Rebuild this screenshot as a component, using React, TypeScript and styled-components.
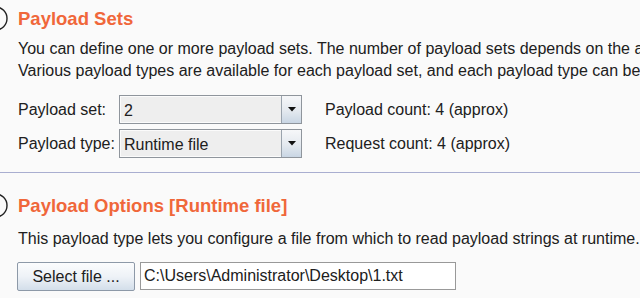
import styled, { createGlobalStyle } from "styled-components";

const GlobalStyle = createGlobalStyle`
  html, body {
    margin: 0;
    padding: 0;
    background: #fafafa;
    overflow: hidden;
  }
  body {
    font-family: "Liberation Sans", Arial, sans-serif;
    color: #202020;
  }
`;

const Page = styled.div`
  width: 640px;
  height: 298px;
  overflow: hidden;
  background: #fafafa;
`;

const Section = styled.section<{ $top: number }>`
  padding: ${(p) => p.$top}px 0 0 0;
`;

const Header = styled.div`
  display: flex;
  align-items: center;
  height: 25px;
`;

const HelpIcon = styled.svg`
  flex: none;
  width: 8px;
  height: 25px;
  margin-right: 10px;
`;

const Title = styled.h2`
  margin: 0;
  font-size: 18.5px;
  font-weight: bold;
  line-height: 25px;
  color: #f0673a;
  white-space: nowrap;
`;

const Body = styled.div`
  padding-left: 18px;
`;

const Text = styled.p<{ $top: number }>`
  margin: ${(p) => p.$top}px 0 0 0;
  font-size: 16px;
  line-height: 22px;
  white-space: nowrap;
`;

const Grid = styled.div`
  display: grid;
  grid-template-columns: 101px 183px auto;
  grid-auto-rows: 29px;
  row-gap: 5px;
  margin-top: 13px;
  align-items: center;
  font-size: 16px;
`;

const Label = styled.span`
  white-space: nowrap;
`;

const Info = styled.span`
  padding-left: 23px;
  white-space: nowrap;
`;

const Combo = styled.div`
  display: flex;
  height: 29px;
  box-sizing: border-box;
  border: 1px solid #8f959c;
  background: #eeeeee;
`;

const ComboValue = styled.span`
  flex: 1;
  padding-left: 3px;
  line-height: 27px;
  border: 1px solid #fbfbfb;
  border-right: none;
`;

const ArrowButton = styled.span`
  width: 19px;
  flex: none;
  border-left: 1px solid #9aa3ad;
  background: linear-gradient(#f6f7f9, #e4e9ef 55%, #c9d6e4);
  display: flex;
  align-items: center;
  justify-content: center;
`;

const Divider = styled.hr`
  margin: 14px 0 0 0;
  border: none;
  height: 1px;
  background: #a9aed0;
`;

const FileRow = styled.div`
  display: flex;
  gap: 5px;
  margin-top: 12px;
  margin-left: -1px;
  font-size: 16px;
`;

const Button = styled.button`
  width: 118px;
  height: 29px;
  box-sizing: border-box;
  border: 1px solid #8d99a8;
  border-radius: 2px;
  background: linear-gradient(#fbfcfd, #eef2f7 50%, #d3deea);
  font: inherit;
  color: #202020;
  padding: 0;
`;

const PathField = styled.input`
  width: 316px;
  height: 28px;
  box-sizing: border-box;
  border: 1px solid #999999;
  background: #ffffff;
  font: inherit;
  color: #202020;
  padding: 0 0 0 3px;
  outline: none;
`;

const Circle = () => (
  <HelpIcon viewBox="0 0 8 25">
    <circle cx="-4.5" cy="12.5" r="11.5" fill="none" stroke="#222" strokeWidth="1.4" />
  </HelpIcon>
);

const Arrow = () => (
  <svg width="8" height="5" viewBox="0 0 8 5">
    <path d="M0 0 H8 L4 4.5 Z" fill="#111" />
  </svg>
);

const ComboBox = ({ value }: { value: string }) => (
  <Combo>
    <ComboValue>{value}</ComboValue>
    <ArrowButton>
      <Arrow />
    </ArrowButton>
  </Combo>
);

export default function App() {
  return (
    <Page>
      <GlobalStyle />
      <Section $top={6}>
        <Header>
          <Circle />
          <Title>Payload Sets</Title>
        </Header>
        <Body>
          <Text $top={7}>
            You can define one or more payload sets. The number of payload sets depends on the attack type defined in the Positions tab.
            <br />
            Various payload types are available for each payload set, and each payload type can be customized in different ways.
          </Text>
          <Grid>
            <Label>Payload set:</Label>
            <ComboBox value="2" />
            <Info>Payload count: 4 (approx)</Info>
            <Label>Payload type:</Label>
            <ComboBox value="Runtime file" />
            <Info>Request count: 4 (approx)</Info>
          </Grid>
        </Body>
      </Section>
      <Divider />
      <Section $top={20}>
        <Header>
          <Circle />
          <Title>Payload Options [Runtime file]</Title>
        </Header>
        <Body>
          <Text $top={10}>
            This payload type lets you configure a file from which to read payload strings at runtime.
          </Text>
          <FileRow>
            <Button>Select file ...</Button>
            <PathField readOnly value="C:\Users\Administrator\Desktop\1.txt" />
          </FileRow>
        </Body>
      </Section>
    </Page>
  );
}
